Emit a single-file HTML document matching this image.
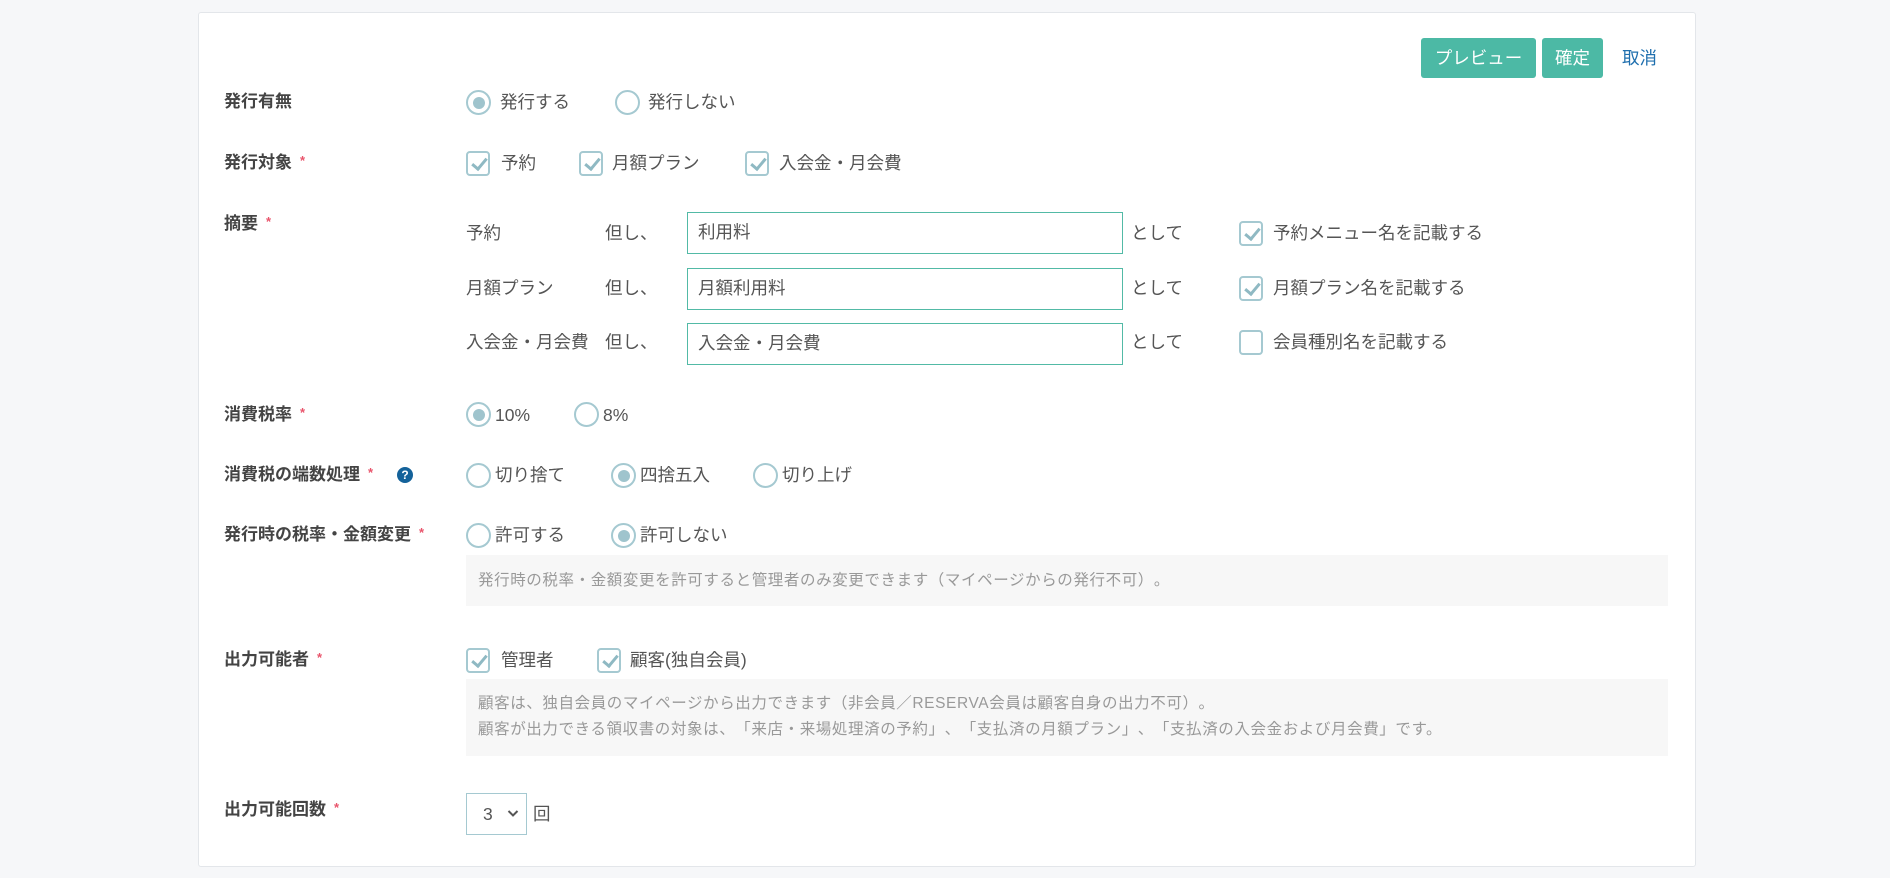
<!DOCTYPE html>
<html><head><meta charset="utf-8">
<style>
*{box-sizing:border-box;margin:0;padding:0}
body{width:1890px;height:878px;background:#f6f7f9;font-family:"Liberation Sans","Noto Sans CJK JP",sans-serif;color:#555;overflow:hidden;position:relative;text-spacing-trim:space-all}
.card{position:absolute;left:198px;top:12px;width:1498px;height:855px;background:#fff;border:1px solid #e3e6ea;border-radius:3px}
.a{position:absolute;white-space:nowrap}
.t{font-size:17.5px;line-height:24px;color:#555}
.lb{font-size:17px;line-height:24px;font-weight:bold;color:#444}
.req{color:#e9546b;font-size:13px;margin-left:8px;vertical-align:top;position:relative;top:-2px}
.rd{width:25px;height:25px;border:2px solid #a5c9d1;border-radius:50%;background:#fff}
.rd.on::after{content:"";position:absolute;left:4.5px;top:4.5px;width:12px;height:12px;border-radius:50%;background:#9fc4cd}
.cb{width:24px;height:25px;border:2px solid #a5c9d1;border-radius:4px;background:#fff}
.cb.on::after{content:"";position:absolute;left:7px;top:2px;width:6px;height:12px;border:solid #8fb9c3;border-width:0 3px 3px 0;transform:rotate(40deg)}
.inp{border:1.5px solid #52baa6;height:42px;width:436px;font-size:17.5px;line-height:39px;padding-left:10px;color:#555}
.note{background:#f7f7f7;font-size:15.5px;color:#999;padding-left:12px;letter-spacing:0.6px}
.btn{background:#4cb9a5;color:#fff;font-size:17.5px;line-height:40px;text-align:center;border-radius:3px;height:40px}
</style></head><body>
<div class="card"></div>

<div class="a btn" style="left:1421px;top:38px;width:115px">プレビュー</div>
<div class="a btn" style="left:1542px;top:38px;width:61px">確定</div>
<div class="a t" style="left:1622px;top:46px;color:#1f6fae">取消</div>

<div class="a lb" style="left:224px;top:90px">発行有無</div>
<div class="a rd on" style="left:466px;top:90px"></div>
<div class="a t" style="left:500px;top:90px">発行する</div>
<div class="a rd" style="left:615px;top:90px"></div>
<div class="a t" style="left:648px;top:90px">発行しない</div>

<div class="a lb" style="left:224px;top:151px">発行対象<span class="req">*</span></div>
<div class="a cb on" style="left:466px;top:151px"></div>
<div class="a t" style="left:501px;top:151px">予約</div>
<div class="a cb on" style="left:579px;top:151px"></div>
<div class="a t" style="left:612px;top:151px">月額プラン</div>
<div class="a cb on" style="left:745px;top:151px"></div>
<div class="a t" style="left:779px;top:151px">入会金・月会費</div>

<div class="a lb" style="left:224px;top:212px">摘要<span class="req">*</span></div>

<div class="a t" style="left:466px;top:221px">予約</div>
<div class="a t" style="left:605px;top:221px">但し、</div>
<div class="a inp" style="left:687px;top:212px">利用料</div>
<div class="a t" style="left:1131px;top:221px">として</div>
<div class="a cb on" style="left:1239px;top:221px"></div>
<div class="a t" style="left:1273px;top:221px">予約メニュー名を記載する</div>

<div class="a t" style="left:466px;top:276px">月額プラン</div>
<div class="a t" style="left:605px;top:276px">但し、</div>
<div class="a inp" style="left:687px;top:268px">月額利用料</div>
<div class="a t" style="left:1131px;top:276px">として</div>
<div class="a cb on" style="left:1239px;top:276px"></div>
<div class="a t" style="left:1273px;top:276px">月額プラン名を記載する</div>

<div class="a t" style="left:466px;top:330px">入会金・月会費</div>
<div class="a t" style="left:605px;top:330px">但し、</div>
<div class="a inp" style="left:687px;top:323px">入会金・月会費</div>
<div class="a t" style="left:1131px;top:330px">として</div>
<div class="a cb" style="left:1239px;top:330px"></div>
<div class="a t" style="left:1273px;top:330px">会員種別名を記載する</div>

<div class="a lb" style="left:224px;top:403px">消費税率<span class="req">*</span></div>
<div class="a rd on" style="left:466px;top:402px"></div>
<div class="a t" style="left:495px;top:403px">10%</div>
<div class="a rd" style="left:574px;top:402px"></div>
<div class="a t" style="left:603px;top:403px">8%</div>

<div class="a lb" style="left:224px;top:463px">消費税の端数処理<span class="req">*</span></div>
<div class="a" style="left:397px;top:467px;width:16px;height:16px;border-radius:50%;background:#14629a;color:#fff;font-size:12px;font-weight:bold;line-height:16px;text-align:center">?</div>
<div class="a rd" style="left:466px;top:463px"></div>
<div class="a t" style="left:495px;top:463px">切り捨て</div>
<div class="a rd on" style="left:611px;top:463px"></div>
<div class="a t" style="left:640px;top:463px">四捨五入</div>
<div class="a rd" style="left:753px;top:463px"></div>
<div class="a t" style="left:782px;top:463px">切り上げ</div>

<div class="a lb" style="left:224px;top:523px">発行時の税率・金額変更<span class="req">*</span></div>
<div class="a rd" style="left:466px;top:523px"></div>
<div class="a t" style="left:495px;top:523px">許可する</div>
<div class="a rd on" style="left:611px;top:523px"></div>
<div class="a t" style="left:640px;top:523px">許可しない</div>
<div class="a note" style="left:466px;top:555px;width:1202px;height:51px;line-height:51px">発行時の税率・金額変更を許可すると管理者のみ変更できます（マイページからの発行不可）。</div>

<div class="a lb" style="left:224px;top:648px">出力可能者<span class="req">*</span></div>
<div class="a cb on" style="left:466px;top:648px"></div>
<div class="a t" style="left:501px;top:648px">管理者</div>
<div class="a cb on" style="left:597px;top:648px"></div>
<div class="a t" style="left:630px;top:648px">顧客(独自会員)</div>
<div class="a note" style="left:466px;top:679px;width:1202px;height:77px;padding-top:12px;line-height:26px">顧客は、独自会員のマイページから出力できます（非会員／RESERVA会員は顧客自身の出力不可）。<br>顧客が出力できる領収書の対象は、「来店・来場処理済の予約」、「支払済の月額プラン」、「支払済の入会金および月会費」です。</div>

<div class="a lb" style="left:224px;top:798px">出力可能回数<span class="req">*</span></div>
<div class="a" style="left:466px;top:793px;width:61px;height:42px;border:1.5px solid #a5c9d1"></div>
<div class="a t" style="left:483px;top:802px">3</div>
<svg class="a" style="left:507px;top:809px" width="12" height="9" viewBox="0 0 12 9"><path d="M1.5 2 L6 6.5 L10.5 2" fill="none" stroke="#555" stroke-width="2"/></svg>
<div class="a t" style="left:533px;top:802px">回</div>
</body></html>
